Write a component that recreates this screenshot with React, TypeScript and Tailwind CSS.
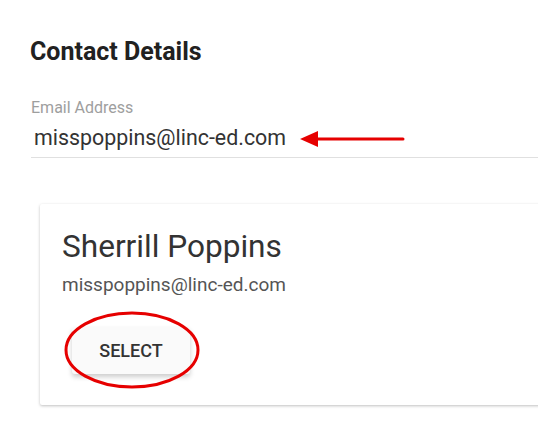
import React from 'react';

export default function App() {
  return (
    <div
      className="relative w-[538px] h-[430px] overflow-hidden bg-white"
      style={{ fontFamily: 'Roboto, "Liberation Sans", sans-serif' }}
    >
      <div className="pl-[30px] pt-[37px]">
        <h2 className="text-[25px] leading-[30px] font-bold text-[#212121]">Contact Details</h2>

        <div className="mt-[31px] ml-[1px]">
          <label className="block text-[16px] leading-[20px] text-[#9e9e9e]">Email Address</label>
          <div className="mt-[6px] border-b border-[#e0e0e0] pb-[5px]">
            <span className="pl-[3px] text-[21.4px] leading-[28px] text-[#333]">misspoppins@linc-ed.com</span>
          </div>
        </div>

        <div className="mt-[46px] ml-[10px] w-[560px] h-[201px] bg-white rounded-[2px] shadow-[0_1px_3px_rgba(0,0,0,0.25)] pl-[22px] pt-[25px]">
          <div className="text-[31.6px] leading-[36px] text-[#333]">Sherrill Poppins</div>
          <div className="mt-[8px] text-[19px] leading-[24px] text-[#555]">misspoppins@linc-ed.com</div>
          <button className="mt-[30px] ml-[10px] w-[118px] h-[47px] bg-[#fafafa] rounded-[3px] shadow-[0_3px_5px_rgba(0,0,0,0.2)] text-[18px] font-medium text-[#333]">
            SELECT
          </button>
        </div>
      </div>

      {/* annotations */}
      <svg className="absolute left-0 top-0 pointer-events-none" width="538" height="430">
        <line x1="314" y1="139" x2="403" y2="139" stroke="#e60000" strokeWidth="3" strokeLinecap="round" />
        <polygon points="300,139 318,131 318,147" fill="#e60000" />
        <ellipse cx="132" cy="350" rx="66" ry="37" fill="none" stroke="#e60000" strokeWidth="3" />
      </svg>
    </div>
  );
}
